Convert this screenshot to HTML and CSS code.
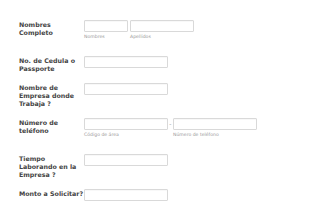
FILE: index.html
```html
<!DOCTYPE html>
<html lang="es">
<head>
    <meta charset="UTF-8">
    <meta name="viewport" content="width=device-width, initial-scale=1.0">
    <title>Solicitud de Préstamo</title>
    <link rel="stylesheet" href="styles.css">
</head>
<body>
    <form class="form-all">
        <ul class="form-section">
            <li class="form-line">
                <label class="form-label">Nombres Completo</label>
                <div class="form-input">
                    <span class="sub-field">
                        <input type="text" class="field-first">
                        <span class="sublabel">Nombres</span>
                    </span>
                    <span class="sub-field">
                        <input type="text" class="field-last">
                        <span class="sublabel">Apellidos</span>
                    </span>
                </div>
            </li>
            <li class="form-line">
                <label class="form-label">No. de Cedula o Passporte</label>
                <div class="form-input">
                    <input type="text" class="field-text">
                </div>
            </li>
            <li class="form-line">
                <label class="form-label">Nombre de Empresa donde Trabaja ?</label>
                <div class="form-input">
                    <input type="text" class="field-text">
                </div>
            </li>
            <li class="form-line">
                <label class="form-label">Número de teléfono</label>
                <div class="form-input">
                    <span class="sub-field">
                        <input type="tel" class="field-text">
                        <span class="sublabel">Código de área</span>
                    </span>
                    <span class="phone-sep">-</span>
                    <span class="sub-field">
                        <input type="tel" class="field-text">
                        <span class="sublabel">Número de teléfono</span>
                    </span>
                </div>
            </li>
            <li class="form-line">
                <label class="form-label">Tiempo Laborando en la Empresa ?</label>
                <div class="form-input">
                    <input type="text" class="field-text">
                </div>
            </li>
            <li class="form-line">
                <label class="form-label">Monto a Solicitar?</label>
                <div class="form-input">
                    <input type="text" class="field-text">
                </div>
            </li>
        </ul>
    </form>
</body>
</html>
```

FILE: styles.css
```css
* {
    margin: 0;
    padding: 0;
    box-sizing: border-box;
}

body {
    background: #fff;
    font-family: "DejaVu Sans", Verdana, sans-serif;
    color: #444;
}

.form-all {
    padding-top: 15.3px;
}

.form-section {
    list-style: none;
}

.form-line {
    display: flex;
    align-items: flex-start;
    padding: 5px 0 5px 19px;
}

.form-label {
    width: 65px;
    flex-shrink: 0;
    padding-top: 1px;
    font-size: 6.3px;
    line-height: 8px;
    font-weight: bold;
    color: #444;
}

.form-input {
    display: flex;
    align-items: flex-start;
}

.sub-field {
    display: flex;
    flex-direction: column;
    height: 26px;
    margin-right: 2.3px;
}

input {
    height: 11.7px;
    border: 1px solid #d9d9d9;
    border-radius: 1px;
    background: #fff;
    box-shadow: inset 0 1px 1px rgba(0,0,0,0.03);
}

.field-text {
    width: 83.7px;
}

.field-first {
    width: 43.7px;
}

.field-last {
    width: 64.3px;
}

.sublabel {
    margin-top: 1.6px;
    font-size: 4.6px;
    line-height: 6px;
    color: #999;
}

.phone-sep {
    width: 5.3px;
    margin-left: -2.3px;
    text-align: center;
    font-size: 6px;
    line-height: 11.7px;
    color: #999;
}
```
